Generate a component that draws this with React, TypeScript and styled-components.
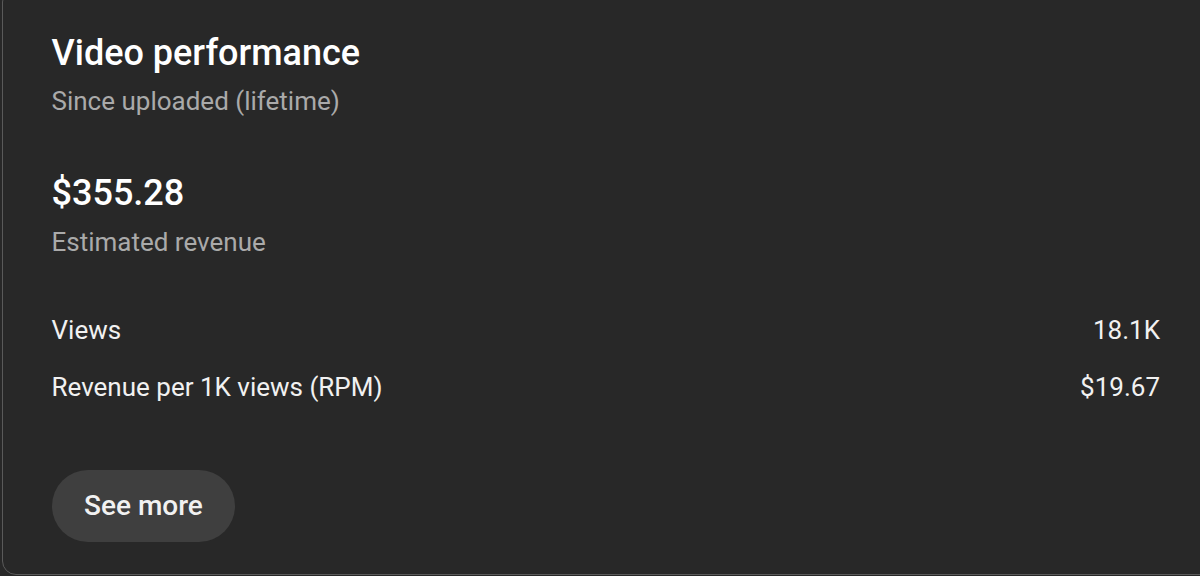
import styled, { createGlobalStyle } from 'styled-components';

const GlobalStyle = createGlobalStyle`
  html, body {
    margin: 0;
    padding: 0;
    background: #282828;
    overflow: hidden;
  }
  * {
    box-sizing: border-box;
  }
`;

const stats = [
  { label: 'Views', value: '18.1K' },
  { label: 'Revenue per 1K views (RPM)', value: '$19.67' },
];

const App = () => {
  return (
    <>
      <GlobalStyle />
      <Card>
        <Header>
          <Title>Video performance</Title>
          <SubText>Since uploaded (lifetime)</SubText>
        </Header>
        <Revenue>
          <BigValue>$355.28</BigValue>
          <SubText>Estimated revenue</SubText>
        </Revenue>
        <StatList>
          {stats.map((s) => (
            <StatRow key={s.label}>
              <span>{s.label}</span>
              <span>{s.value}</span>
            </StatRow>
          ))}
        </StatList>
        <SeeMore>See more</SeeMore>
      </Card>
    </>
  );
};

const Card = styled.section`
  margin: -12px 0 0 2px;
  height: 587px;
  width: 1230px;
  background: #282828;
  border: 1.5px solid #5a5a5a;
  border-radius: 14px;
  padding: 41.5px 0 0 48.5px;
  font-family: Roboto, 'Liberation Sans', sans-serif;
  color: #f1f1f1;
  display: flex;
  flex-direction: column;
`;

const Header = styled.div`
  display: flex;
  flex-direction: column;
  gap: 10px;
`;

const Title = styled.h1`
  margin: 0;
  font-size: 36px;
  font-weight: 500;
  line-height: 44px;
  color: #fff;
`;

const SubText = styled.div`
  font-size: 26px;
  line-height: 32px;
  color: #aaa;
`;

const Revenue = styled.div`
  display: flex;
  flex-direction: column;
  gap: 11px;
  margin-top: 54px;
`;

const BigValue = styled.div`
  font-size: 36px;
  font-weight: 500;
  line-height: 44px;
  color: #fff;
`;

const StatList = styled.div`
  display: flex;
  flex-direction: column;
  gap: 25px;
  margin-top: 56px;
  width: 1108.5px;
`;

const StatRow = styled.div`
  display: flex;
  justify-content: space-between;
  font-size: 26px;
  line-height: 32px;
  color: #f1f1f1;
`;

const SeeMore = styled.button`
  align-self: flex-start;
  margin-top: 67px;
  height: 72px;
  padding: 0 32.5px;
  border: none;
  border-radius: 36px;
  background: #3f3f3f;
  color: #f1f1f1;
  font-family: Roboto, 'Liberation Sans', sans-serif;
  font-size: 28px;
  font-weight: 500;
  cursor: pointer;
`;

export default App;
